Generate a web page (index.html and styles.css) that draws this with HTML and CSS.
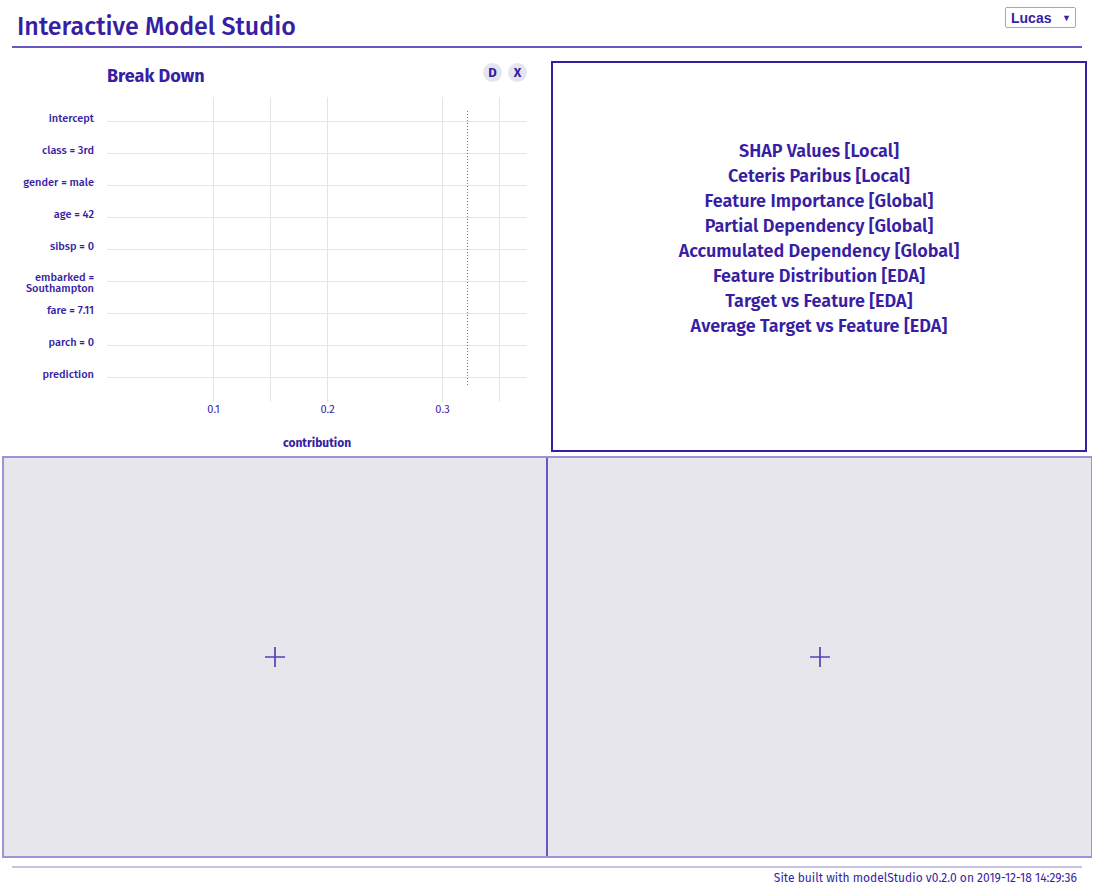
FILE: index.html
```html
<!DOCTYPE html>
<html>
<head>
<meta charset="utf-8">
<title>Interactive Model Studio</title>
<link rel="stylesheet" href="styles.css">
</head>
<body>
<div class="page">
  <header class="header">
    <h1 class="title">Interactive Model Studio</h1>
    <div class="select"><span class="select-text">Lucas</span><span class="select-arrow">&#9660;</span></div>
  </header>
  <main class="top-row">
    <section class="chart-panel">
      <div class="chart-head">
        <h2 class="chart-title">Break Down</h2>
        <div class="chart-buttons">
          <span class="round-btn">D</span>
          <span class="round-btn">X</span>
        </div>
      </div>
      <svg class="chart" width="546" height="366" viewBox="0 0 546 366">
        <g class="grid">
          <line x1="213.5" y1="7" x2="213.5" y2="312"/>
          <line x1="270.5" y1="7" x2="270.5" y2="312"/>
          <line x1="327.5" y1="7" x2="327.5" y2="312"/>
          <line x1="442.5" y1="7" x2="442.5" y2="312"/>
          <line x1="499.5" y1="7" x2="499.5" y2="312"/>
          <line x1="107" y1="31.5" x2="527" y2="31.5"/>
          <line x1="107" y1="63.5" x2="527" y2="63.5"/>
          <line x1="107" y1="95.5" x2="527" y2="95.5"/>
          <line x1="107" y1="127.5" x2="527" y2="127.5"/>
          <line x1="107" y1="159.5" x2="527" y2="159.5"/>
          <line x1="107" y1="191.5" x2="527" y2="191.5"/>
          <line x1="107" y1="223.5" x2="527" y2="223.5"/>
          <line x1="107" y1="255.5" x2="527" y2="255.5"/>
          <line x1="107" y1="287.5" x2="527" y2="287.5"/>
        </g>
        <line class="pred-line" x1="467.5" y1="21" x2="467.5" y2="297"/>
        <g class="ylabels">
          <text x="94" y="32">intercept</text>
          <text x="94" y="64">class = 3rd</text>
          <text x="94" y="96">gender = male</text>
          <text x="94" y="128">age = 42</text>
          <text x="94" y="160">sibsp = 0</text>
          <text x="94" y="191">embarked =</text>
          <text x="94" y="202">Southampton</text>
          <text x="94" y="224">fare = 7.11</text>
          <text x="94" y="256">parch = 0</text>
          <text x="94" y="288">prediction</text>
        </g>
        <g class="xlabels">
          <text x="213.5" y="323">0.1</text>
          <text x="327.5" y="323">0.2</text>
          <text x="442.5" y="323">0.3</text>
        </g>
        <text class="axis-title" x="317" y="357">contribution</text>
      </svg>
    </section>
    <section class="menu-cell">
      <div class="menu-panel">
        <div class="menu-item">SHAP Values [Local]</div>
        <div class="menu-item">Ceteris Paribus [Local]</div>
        <div class="menu-item">Feature Importance [Global]</div>
        <div class="menu-item">Partial Dependency [Global]</div>
        <div class="menu-item">Accumulated Dependency [Global]</div>
        <div class="menu-item">Feature Distribution [EDA]</div>
        <div class="menu-item">Target vs Feature [EDA]</div>
        <div class="menu-item">Average Target vs Feature [EDA]</div>
      </div>
    </section>
  </main>
  <section class="bottom-row">
    <div class="slot slot-left">
      <svg class="plus" width="22" height="22" viewBox="0 0 22 22"><path d="M11 1V21M1 11H21"/></svg>
    </div>
    <div class="slot">
      <svg class="plus" width="22" height="22" viewBox="0 0 22 22"><path d="M11 1V21M1 11H21"/></svg>
    </div>
  </section>
  <footer class="footer">
    <span class="footer-text">Site built with modelStudio v0.2.0 on 2019-12-18 14:29:36</span>
  </footer>
</div>
</body>
</html>
```

FILE: styles.css
```css
* { box-sizing: border-box; }
html, body { margin: 0; padding: 0; background: #ffffff; }
body {
  font-family: "Fira Sans", "Lato", "Noto Sans", sans-serif;
  color: #371ea3;
}
.page { width: 1094px; }

.header {
  margin: 0 12px;
  height: 48px;
  border-bottom: 2px solid #6b57c0;
  display: flex;
  justify-content: space-between;
  align-items: flex-start;
}
.title {
  margin: 12px 0 0 5px;
  font-size: 25px;
  line-height: 30px;
  font-weight: 500;
  color: #371ea3;
}
.select {
  margin: 7px 6px 0 0;
  width: 71px;
  height: 21px;
  border: 1px solid #a9a9a9;
  border-radius: 2px;
  display: flex;
  align-items: center;
  justify-content: space-between;
  padding: 0 4px 0 5px;
  font-family: "Liberation Sans", Arial, sans-serif;
  font-weight: 700;
  font-size: 14px;
  color: #371ea3;
}
.select-arrow { font-size: 9px; color: #371ea3; }

.top-row {
  display: grid;
  grid-template-columns: 546px 548px;
  height: 401px;
  margin-top: 7px;
}
.chart-panel { display: flex; flex-direction: column; }
.chart-head {
  height: 35px;
  display: flex;
  justify-content: space-between;
  align-items: flex-start;
  padding-left: 107px;
  padding-right: 19px;
}
.chart-title {
  margin: 10px 0 0 0;
  font-size: 18px;
  line-height: 22px;
  font-weight: 700;
  color: #371ea3;
}
.chart-buttons { display: flex; gap: 6px; margin-top: 8px; }
.round-btn {
  width: 19px;
  height: 19px;
  border-radius: 50%;
  background: #e6e5ee;
  display: flex;
  align-items: center;
  justify-content: center;
  font-size: 13px;
  font-weight: 700;
  color: #371ea3;
}
.chart { display: block; }
.grid line { stroke: #e4e3eb; stroke-width: 1; }
.pred-line { stroke: #7566c8; stroke-width: 1; stroke-dasharray: 1 2; }
.ylabels text {
  font-size: 11px;
  fill: #371ea3;
  text-anchor: end;
  font-weight: 500;
}
.xlabels text { font-size: 11px; fill: #371ea3; text-anchor: middle; }
.axis-title { font-size: 12px; font-weight: 700; fill: #371ea3; text-anchor: middle; }

.menu-cell { padding: 6px 7px 3px 5px; }
.menu-panel {
  height: 391px;
  border: 2px solid #371ea3;
  display: flex;
  flex-direction: column;
  align-items: center;
  padding-top: 76px;
}
.menu-item {
  font-size: 18px;
  line-height: 25px;
  font-weight: 600;
  color: #371ea3;
}

.bottom-row {
  margin: 0 2px 0 2px;
  height: 402px;
  display: grid;
  grid-template-columns: 544px 1fr;
  background: #e7e6ec;
  border: 2px solid #9e93d6;
  border-right-width: 1px;
}
.slot { display: flex; align-items: center; justify-content: center; }
.slot-left { border-right: 2px solid #6b57c0; }
.plus { display: block; }
.plus path { stroke: #5641b8; stroke-width: 1.7; fill: none; }

.footer {
  margin: 8px 12px 0 12px;
  border-top: 2px solid #c8c2e6;
  display: flex;
  justify-content: flex-end;
  padding: 3px 5px 0 0;
}
.footer-text { font-size: 12px; line-height: 14px; color: #371ea3; }
```
